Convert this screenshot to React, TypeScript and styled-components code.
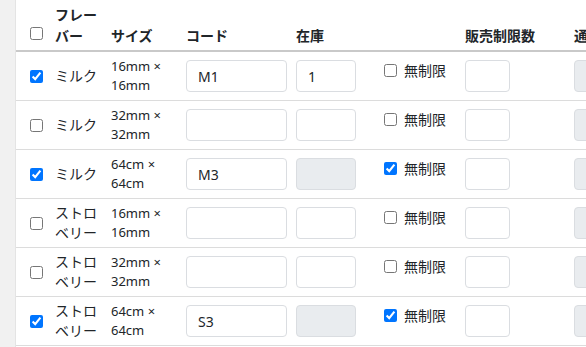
import React from "react";
import styled, { createGlobalStyle } from "styled-components";

const Global = createGlobalStyle`
  html, body {
    margin: 0;
    padding: 0;
    background: #ffffff;
    overflow: hidden;
  }
  body {
    font-family: "Noto Sans", "Noto Sans CJK JP", sans-serif;
    font-size: 14px;
    color: #212529;
  }
  * { box-sizing: border-box; }
`;

const Page = styled.div`
  display: flex;
  width: 800px;
  min-height: 347px;
`;

const Sidebar = styled.div`
  flex: 0 0 16px;
  background: #f1f1f1;
  border-right: 1px solid #e4e4e4;
`;

const Main = styled.div`
  flex: 1 1 auto;
  background: #fff;
`;

const Table = styled.table`
  border-collapse: collapse;
  table-layout: fixed;
  width: 674px;
`;

const HeadRow = styled.tr`
  border-bottom: 2px solid #c9c9c9;
`;

const HeadCell = styled.th<{ $pl?: number }>`
  text-align: left;
  vertical-align: bottom;
  font-weight: 700;
  font-size: 14px;
  line-height: 21px;
  padding: 4px 4px 4px ${(p) => p.$pl ?? 4}px;
  white-space: normal;
  overflow: hidden;
`;

const Row = styled.tr`
  border-bottom: 1px solid #dcdcdc;
`;

const Cell = styled.td<{ $pl?: number; $top?: boolean }>`
  vertical-align: ${(p) => (p.$top ? "top" : "middle")};
  padding: 4px 4px 4px ${(p) => p.$pl ?? 4}px;
  overflow: hidden;
`;

const Check = styled.input.attrs({ type: "checkbox" })`
  width: 13px;
  height: 13px;
  margin: 0;
  display: block;
`;

const FlavorText = styled.div`
  font-size: 14px;
  line-height: 20px;
`;

const SizeText = styled.div`
  font-size: 13px;
  line-height: 19px;
`;

const TextInput = styled.input<{ $w: number }>`
  display: block;
  width: ${(p) => p.$w}px;
  height: 32px;
  margin: 4px 0;
  padding: 0 11px;
  border: 1px solid #dadde1;
  border-radius: 4px;
  font-family: "Noto Sans", "Noto Sans CJK JP", sans-serif;
  font-size: 14px;
  color: #212529;
  background: #ffffff;
  outline: none;
  &:disabled {
    background: #e9ecef;
  }
`;

const UnlimitedLabel = styled.label`
  display: flex;
  align-items: center;
  gap: 7px;
  height: 21px;
  margin-top: 4px;
  margin-left: 20px;
  font-size: 14px;
  line-height: 21px;
  white-space: nowrap;
`;

type Item = {
  checked: boolean;
  flavor: string;
  size: [string, string];
  code: string;
  stock: string;
  unlimited: boolean;
};

const items: Item[] = [
  { checked: true, flavor: "ミルク", size: ["16mm ×", "16mm"], code: "M1", stock: "1", unlimited: false },
  { checked: false, flavor: "ミルク", size: ["32mm ×", "32mm"], code: "", stock: "", unlimited: false },
  { checked: true, flavor: "ミルク", size: ["64cm ×", "64cm"], code: "M3", stock: "", unlimited: true },
  { checked: false, flavor: "ストロベリー", size: ["16mm ×", "16mm"], code: "", stock: "", unlimited: false },
  { checked: false, flavor: "ストロベリー", size: ["32mm ×", "32mm"], code: "", stock: "", unlimited: false },
  { checked: true, flavor: "ストロベリー", size: ["64cm ×", "64cm"], code: "S3", stock: "", unlimited: true },
];

const widths = [35, 56, 75, 110, 68, 101, 109, 120];

export default function App() {
  return (
    <>
      <Global />
      <Page>
        <Sidebar />
        <Main>
          <Table>
            <colgroup>
              {widths.map((w, i) => (
                <col key={i} style={{ width: w }} />
              ))}
            </colgroup>
            <thead>
              <HeadRow>
                <HeadCell $pl={14}>
                  <Check readOnly style={{ marginBottom: 6 }} />
                </HeadCell>
                <HeadCell>フレーバー</HeadCell>
                <HeadCell>サイズ</HeadCell>
                <HeadCell>コード</HeadCell>
                <HeadCell>在庫</HeadCell>
                <HeadCell></HeadCell>
                <HeadCell>販売制限数</HeadCell>
                <HeadCell>通常価格</HeadCell>
              </HeadRow>
            </thead>
            <tbody>
              {items.map((it, i) => (
                <Row key={i}>
                  <Cell $pl={14}>
                    <Check defaultChecked={it.checked} />
                  </Cell>
                  <Cell>
                    <FlavorText>{it.flavor}</FlavorText>
                  </Cell>
                  <Cell>
                    <SizeText>
                      {it.size[0]}
                      <br />
                      {it.size[1]}
                    </SizeText>
                  </Cell>
                  <Cell>
                    <TextInput $w={101} defaultValue={it.code} />
                  </Cell>
                  <Cell>
                    <TextInput $w={60} defaultValue={it.stock} disabled={it.unlimited} />
                  </Cell>
                  <Cell $top>
                    <UnlimitedLabel>
                      <Check defaultChecked={it.unlimited} />
                      無制限
                    </UnlimitedLabel>
                  </Cell>
                  <Cell>
                    <TextInput $w={45} />
                  </Cell>
                  <Cell>
                    <TextInput $w={80} disabled />
                  </Cell>
                </Row>
              ))}
            </tbody>
          </Table>
        </Main>
      </Page>
    </>
  );
}
